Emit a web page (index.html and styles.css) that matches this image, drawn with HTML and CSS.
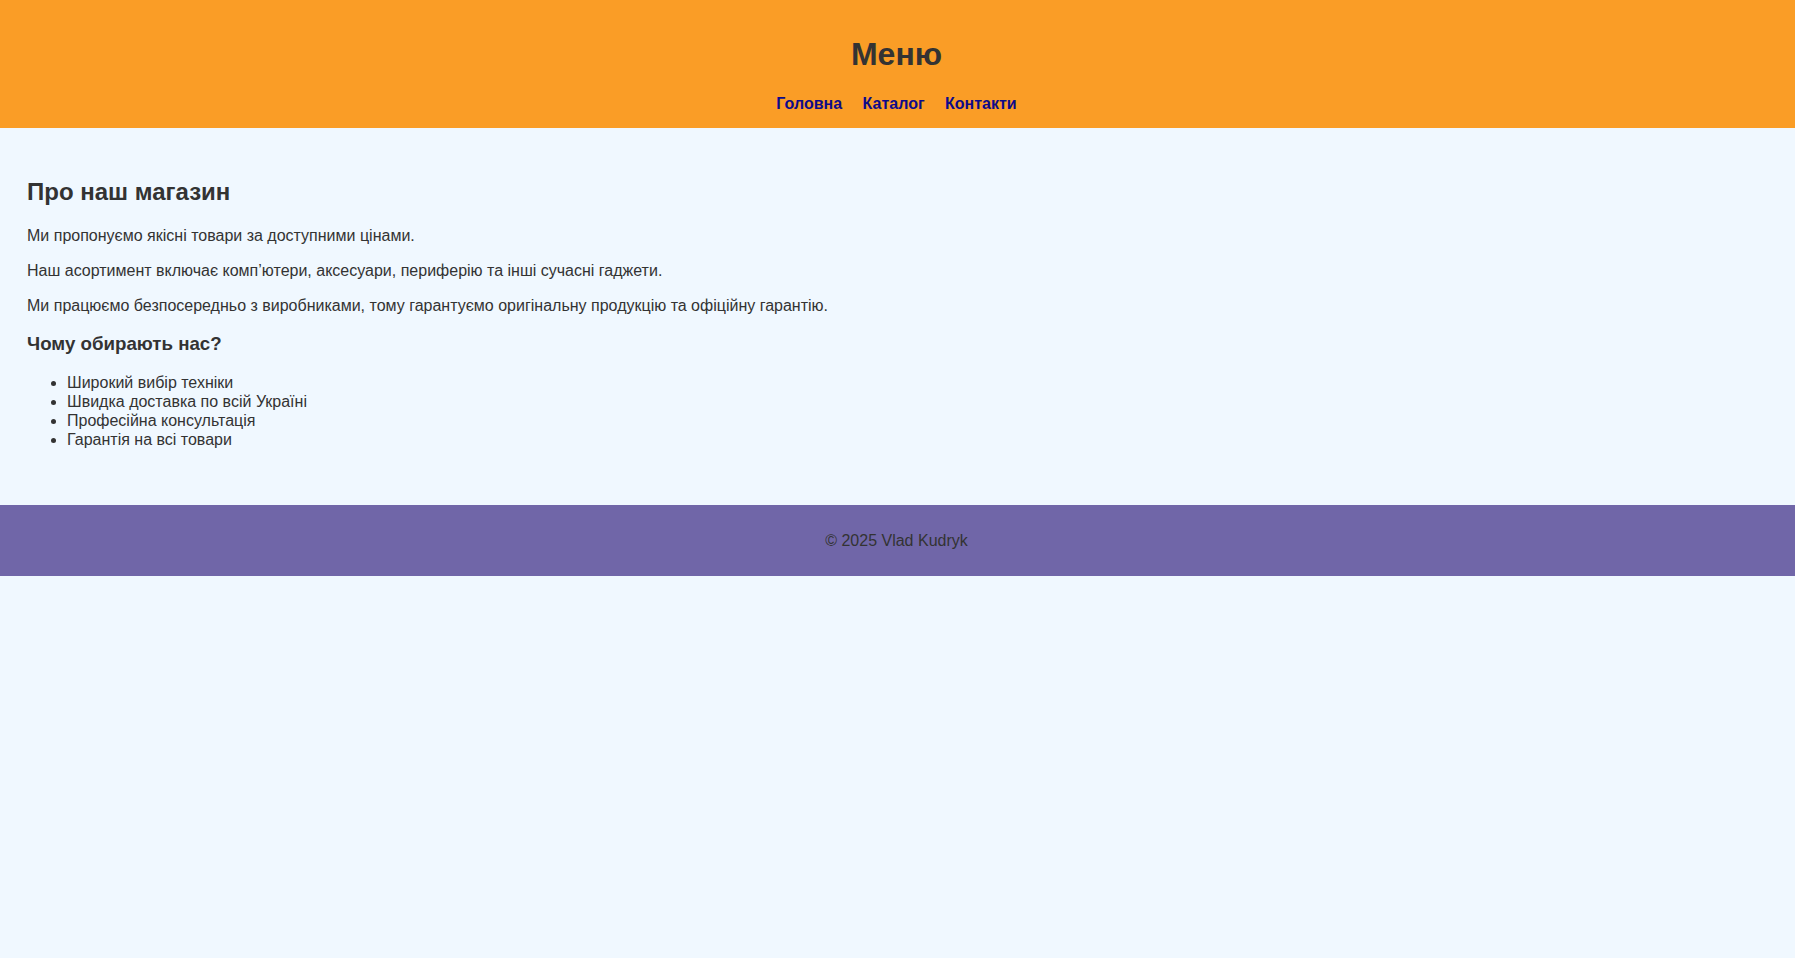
FILE: index.html
```html
<!DOCTYPE html>
<html lang="uk">
<head>
<meta charset="utf-8">
<title>Про наш магазин</title>
<link rel="stylesheet" href="styles.css">
</head>
<body>
<header class="site-header">
  <h1 class="site-title">Меню</h1>
  <nav class="site-nav">
    <a href="#">Головна</a>
    <a href="#">Каталог</a>
    <a href="#">Контакти</a>
  </nav>
</header>
<main class="content">
  <h2>Про наш магазин</h2>
  <p>Ми пропонуємо якісні товари за доступними цінами.</p>
  <p>Наш асортимент включає комп’ютери, аксесуари, периферію та інші сучасні гаджети.</p>
  <p>Ми працюємо безпосередньо з виробниками, тому гарантуємо оригінальну продукцію та офіційну гарантію.</p>
  <h3>Чому обирають нас?</h3>
  <ul>
    <li>Широкий вибір техніки</li>
    <li>Швидка доставка по всій Україні</li>
    <li>Професійна консультація</li>
    <li>Гарантія на всі товари</li>
  </ul>
</main>
<footer class="site-footer">
  <p>© 2025 Vlad Kudryk</p>
</footer>
</body>
</html>
```

FILE: styles.css
```css
html, body {
  margin: 0;
  padding: 0;
}
body {
  font-family: "Liberation Sans", Arial, sans-serif;
  font-size: 16px;
  line-height: 1.19;
  color: #333;
  background: #f0f8ff;
}
.site-header {
  background: #fa9d26;
  text-align: center;
  padding: 15px 2px 15px 0;
}
.site-title {
  font-size: 32px;
  margin: 21px 0;
  line-height: normal;
}
.site-nav {
  line-height: 1.2;
}
.site-nav a {
  color: #0d0a8a;
  font-weight: bold;
  text-decoration: none;
  margin: 0 8px;
}
.content {
  padding: 30px 27px 40px;
}
.content h2 {
  font-size: 24px;
  margin: 20px 0;
  line-height: normal;
}
.content p {
  margin: 16px 0;
}
.content h3 {
  font-size: 18.72px;
  margin: 17.4px 0 18px;
  line-height: normal;
}
.content ul {
  margin: 16px 0;
  padding-left: 40px;
}
.content li {
  line-height: 19px;
}
.site-footer {
  background: #7066a8;
  text-align: center;
  padding: 10px 12px 10px 10px;
}
.site-footer p {
  margin: 16px 0;
}
```
